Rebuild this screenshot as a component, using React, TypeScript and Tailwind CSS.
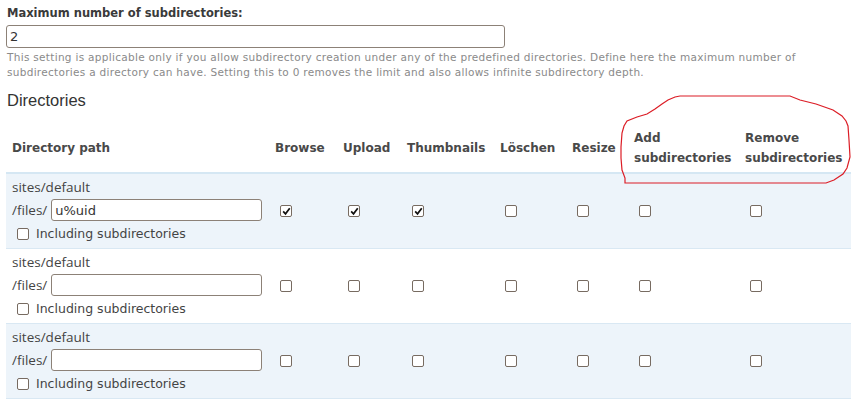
import React from "react";

const rows = [
  { path: "u%uid", perms: [true, true, true, false, false, false, false], shaded: true },
  { path: "", perms: [false, false, false, false, false, false, false], shaded: false },
  { path: "", perms: [false, false, false, false, false, false, false], shaded: true },
];

const headers = ["Browse", "Upload", "Thumbnails", "Löschen", "Resize"];

function Box({ checked }: { checked?: boolean }) {
  return (
    <span className="inline-flex w-[12px] h-[12px] shrink-0 items-center justify-center rounded-[2px] border border-[#776b61] bg-white align-middle">
      {checked && (
        <svg viewBox="0 0 10 10" className="w-[9px] h-[9px]">
          <path d="M1.3 4.8 L3.9 7.6 L8.6 1.4" stroke="#111" strokeWidth="1.9" fill="none" />
        </svg>
      )}
    </span>
  );
}

export default function App() {
  return (
    <div className="relative w-[857px] h-[410px] overflow-hidden bg-white px-[6px] pt-[5px] text-[#333] font-['DejaVu_Sans',sans-serif]">
      {/* Max subdirectories setting */}
      <label className="block pl-[1px] text-[11.5px] font-bold leading-[16px] text-[#3a3a3a]">
        Maximum number of subdirectories:
      </label>
      <input
        readOnly
        value="2"
        className="mt-[4px] block h-[23px] w-[499px] rounded-[3px] border border-[#8c8177] px-[3px] text-[13px] text-[#333] outline-none"
      />
      <p className="mt-[2px] pl-[1px] text-[10.5px] leading-[15px] tracking-[0.3px] text-[#8a8a8a]">
        This setting is applicable only if you allow subdirectory creation under any of the predefined directories. Define here the maximum number of
        <br />
        subdirectories a directory can have. Setting this to 0 removes the limit and also allows infinite subdirectory depth.
      </p>

      <h2 className="mt-[10px] pl-[1px] font-['Liberation_Sans',sans-serif] text-[16.5px] leading-[20px] text-[#333]">Directories</h2>

      <table className="mt-[13px] w-[845px] table-fixed border-collapse">
        <colgroup>
          <col className="w-[263px]" />
          <col className="w-[68px]" />
          <col className="w-[64px]" />
          <col className="w-[93px]" />
          <col className="w-[72px]" />
          <col className="w-[62px]" />
          <col className="w-[111px]" />
          <col className="w-[112px]" />
        </colgroup>
        <thead>
          <tr className="h-[50px] border-b-2 border-[#d5e7f3]">
            <th className="pl-[6px] text-left align-middle text-[12px] font-bold leading-[20px] text-[#494949]">Directory path</th>
            {headers.map((h) => (
              <th key={h} className="pl-[6px] text-left align-middle text-[12px] font-bold leading-[20px] text-[#494949]">
                {h}
              </th>
            ))}
            <th className="pl-[6px] text-left align-middle text-[12px] font-bold leading-[20px] text-[#494949]">
              Add
              <br />
              subdirectories
            </th>
            <th className="pl-[6px] text-left align-middle text-[12px] font-bold leading-[20px] text-[#494949]">
              Remove
              <br />
              subdirectories
            </th>
          </tr>
        </thead>
        <tbody>
          {rows.map((r, i) => (
            <tr key={i} className={`h-[75px] border-b border-[#d9e8f3] ${r.shaded ? "bg-[#edf4fa]" : "bg-white"}`}>
              <td className="pl-[6px] align-middle">
                <div className="font-['Open_Sans',sans-serif] text-[13.5px] leading-[16px] text-[#444]">sites/default</div>
                <div className="mt-[4px] flex items-center gap-[4px]">
                  <span className="font-['Open_Sans',sans-serif] text-[13.5px] text-[#444]">/files/</span>
                  <input
                    readOnly
                    value={r.path}
                    className="h-[22px] w-[211px] rounded-[3px] border border-[#8c8177] bg-white px-[3px] text-[13px] text-[#333] outline-none"
                  />
                </div>
                <div className="mt-[5px] flex items-center gap-[7px] pl-[5px]">
                  <Box />
                  <span className="text-[12.5px] leading-[16px] text-[#444]">Including subdirectories</span>
                </div>
              </td>
              {r.perms.map((p, j) => (
                <td key={j} className="pl-[11px] align-middle">
                  <Box checked={p} />
                </td>
              ))}
            </tr>
          ))}
        </tbody>
      </table>

      {/* hand-drawn annotation around the subdirectory columns */}
      <svg className="pointer-events-none absolute left-0 top-0 h-[410px] w-[857px]" viewBox="0 0 857 410">
        <path
          d="M680 96 L790 96 L800 100 L816 104 L833 110 L842 116 L846 121 L848 126 L849 140 L850 157 L847 168 L843 174 L834 180 L826 183 L625 183 L625 178 L622 170 L621 158 L621 147 L622 133 L624 126 L627 121 L637 117 L647 114 L655 109 L662 104 L668 100 L675 97 Z"
          stroke="#dc1d26"
          strokeWidth="1.2"
          fill="none"
        />
      </svg>
    </div>
  );
}
